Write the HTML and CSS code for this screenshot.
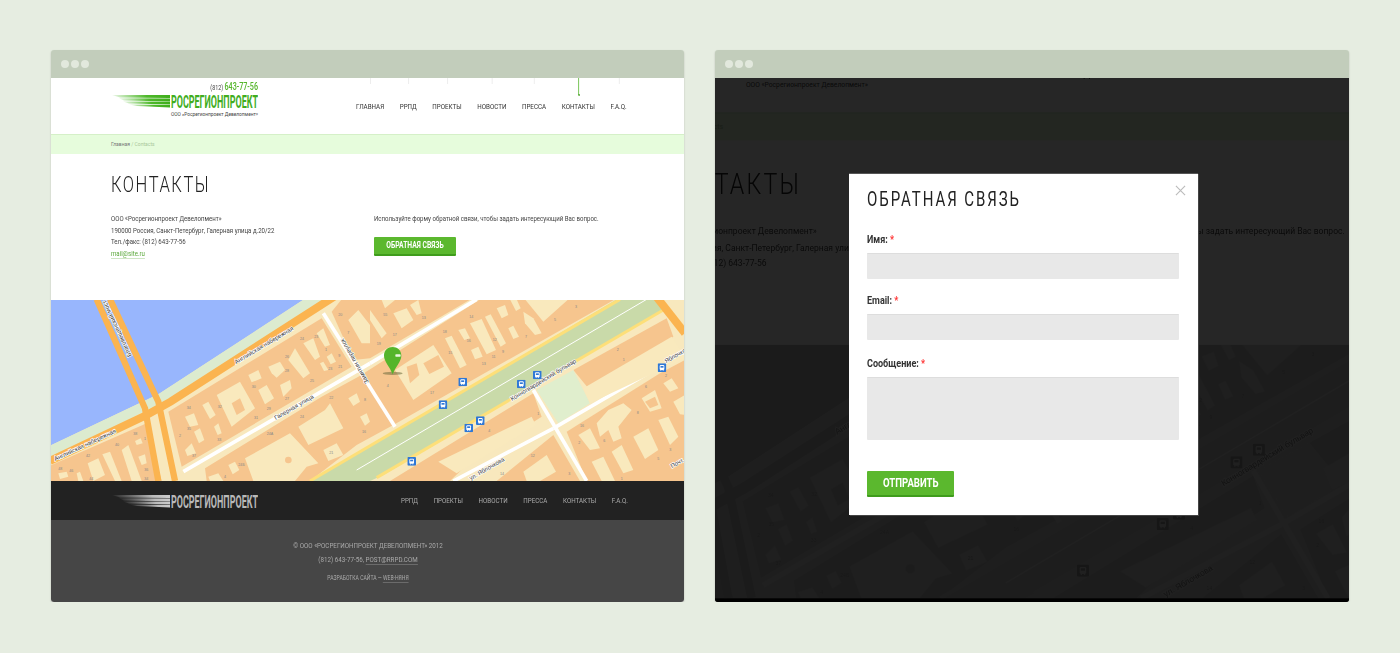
FILE: index.html
```html
<!DOCTYPE html>
<html lang="ru">

<head>
    <meta charset="UTF-8">
    <meta name="viewport" content="width=device-width, initial-scale=1.0">
    <title>Росрегионпроект - контакты</title>

    <link rel="stylesheet" href="styles.css">
</head>

<body>

<!-- shared drawings: logo stripes and the map -->
<svg class="sprite" aria-hidden="true">
    <defs>
        <linearGradient id="gradGreen" x1="0" x2="1" y1="0" y2="0">
            <stop offset="0" stop-color="#4eb82a" stop-opacity="0.1"/>
            <stop offset="0.6" stop-color="#4eb82a"/>
            <stop offset="1" stop-color="#3fae1c"/>
        </linearGradient>
        <linearGradient id="gradGrey" x1="0" x2="1" y1="0" y2="0">
            <stop offset="0" stop-color="#aaa" stop-opacity="0.05"/>
            <stop offset="0.7" stop-color="#bbb"/>
            <stop offset="1" stop-color="#ccc"/>
        </linearGradient>
        <symbol id="stripes" viewBox="0 0 58 13">
            <path d="M0 0L58 0L58 3L8 2.4Z"/>
            <path d="M7 3.2L58 3.4L58 6.4L12 5.6Z"/>
            <path d="M11 6.4L58 6.8L58 9.6L17 8.6Z"/>
            <path d="M17 9.4L58 10L58 12.6L25 11Z"/>
        </symbol>
        <symbol id="bus" viewBox="0 0 26 26">
            <rect width="26" height="26" rx="3" fill="#2f78d6"/>
            <rect x="6" y="5" width="14" height="15" rx="3" fill="#fff"/>
            <rect x="8.500" y="8" width="9" height="5" fill="#2f78d6"/>
            <rect x="8" y="20" width="3" height="2" fill="#fff"/>
            <rect x="15" y="20" width="3" height="2" fill="#fff"/>
        </symbol>
        <symbol id="mapArt" viewBox="3 15 1902 543" preserveAspectRatio="none">
            <rect x="0" y="0" width="1910" height="560" fill="#f8e8bd"/>
            <polygon points="0,0 782,0 325,298 0,452" fill="#98b6fd"/>
            <polygon points="782,0 845,0 370,305 0,492 0,452 325,298" fill="#dcebcf"/>

            <g class="block">
                <polygon points="355,350 815,70 905,215 395,515"/>
                <polygon points="845,50 875,13 1262,13 960,190 910,195"/>
                <polygon points="0,512 290,385 335,558 0,558"/>
                <polygon points="465,520 815,305 925,245 1290,13 1695,13 1030,390 920,450 780,558 470,558"/>
            </g>
            <g class="block" transform="translate(960,0)">
                <polygon points="60,558 490,295 515,365 290,510 240,558"/>
                <polygon points="610,225 890,70 910,125 655,280"/>
                <polygon points="590,410 870,235 945,195 945,558 650,558"/>
                <polygon points="380,558 550,420 630,558"/>
            </g>

            <g class="park" transform="translate(960,0)">
                <polygon points="740,13 880,13 880,45 40,540 0,558 -180,558 0,455"/>
                <polygon points="500,285 610,225 660,325 565,385" class="park-light"/>
            </g>
            <g transform="translate(960,0)" fill="none">
                <line x1="-180" y1="558" x2="750" y2="13" class="road-yellow"/>
                <line x1="20" y1="548" x2="880" y2="45" class="road-yellow"/>
                <line x1="-40" y1="525" x2="830" y2="13" class="road-white thin"/>
            </g>

            <g fill="none">
                <line x1="400" y1="530" x2="960" y2="205" class="road-white"/>
                <line x1="960" y1="205" x2="1280" y2="13" class="road-white"/>
                <line x1="820" y1="55" x2="1035" y2="395" class="road-white"/>
                <line x1="1450" y1="285" x2="1610" y2="558" class="road-white"/>
                <line x1="1210" y1="558" x2="1510" y2="400" class="road-white"/>
                <line x1="1510" y1="400" x2="1905" y2="170" class="road-white"/>
                <polyline points="860,0 362,320 290,360 0,498" class="road-main"/>
                <polyline points="140,13 285,340 325,558" class="road-main thin"/>
                <polyline points="180,13 325,320 375,558" class="road-main thin"/>
                <line x1="1815" y1="0" x2="1905" y2="115" class="road-main"/>
            </g>

            <g class="house">
                <polygon points="595,240 625,225 635,250 605,262"/>
                <polygon points="625,285 650,270 672,310 645,328"/>
                <polygon points="655,215 690,200 705,225 680,248 665,235"/>
                <polygon points="715,195 735,160 780,235 760,250"/>
                <polygon points="690,270 720,255 725,280 700,305"/>
                <polygon points="760,145 790,130 810,185 795,195"/>
                <polygon points="800,115 820,100 840,150 825,155"/>
                <polygon points="830,185 845,175 858,200 842,208"/>
                <polygon points="810,205 820,200 835,225 822,228"/>
                <polygon points="500,300 570,260 615,340 545,395"/>
                <polygon points="457,330 475,320 497,360 480,372"/>
                <polygon points="405,365 432,355 445,390 420,395"/>
                <polygon points="432,410 450,400 463,435 447,445"/>
                <polygon points="492,395 505,385 515,415 503,420"/>
                <polygon points="405,465 425,445 438,475 412,483"/>
                <polygon points="895,75 925,45 960,90 960,145 935,145"/>
                <polygon points="895,310 920,295 930,320 910,333"/>
                <polygon points="930,365 950,355 960,380 945,392"/>
                <polygon points="745,395 825,345 840,325 880,400 775,450"/>
                <polygon points="820,465 860,445 880,480 835,498"/>
                <polygon points="585,490 720,415 805,505 770,515 735,558 610,558"/>
                <polygon points="535,510 555,500 568,525 548,538"/>
                <polygon points="113,505 145,490 165,540 130,558"/>
                <polygon points="157,478 180,470 215,558 195,558"/>
                <polygon points="215,465 235,450 275,558 245,558"/>
                <polygon points="255,438 272,430 278,445 260,450"/>
                <polygon points="265,485 285,478 290,505 275,510"/>
                <polygon points="25,535 50,530 55,545 30,552"/>
                <polygon points="80,535 90,530 100,558 85,558"/>
                <polygon points="475,545 505,535 520,558 480,558"/>
            </g>
            <g class="house" transform="translate(960,0)">
                <polygon points="70,55 110,40 130,75 95,100"/>
                <polygon points="120,30 145,15 155,55 140,60"/>
                <polygon points="0,45 50,115 35,130 0,75"/>
                <polygon points="35,15 75,15 45,40"/>
                <polygon points="225,130 245,122 290,210 270,220"/>
                <polygon points="300,85 335,72 378,165 350,178"/>
                <polygon points="345,65 362,58 408,145 392,155"/>
                <polygon points="265,105 285,100 300,130 283,135"/>
                <polygon points="303,165 325,155 338,185 315,193"/>
                <polygon points="380,40 405,30 415,60 395,70"/>
                <polygon points="415,100 430,92 447,125 430,132"/>
                <polygon points="420,13 440,13 452,40 438,48"/>
                <polygon points="460,50 490,70 515,115 495,120 465,85"/>
                <polygon points="465,13 595,13 520,80"/>
                <polygon points="75,225 190,150 245,235 130,315"/>
                <polygon points="625,420 660,400 690,460 660,465"/>
                <polygon points="680,385 715,345 760,325 785,345 745,395 755,430 730,440 715,405 690,425"/>
                <polygon points="815,310 855,285 875,340 840,350"/>
                <polygon points="790,425 835,400 865,465 825,492"/>
                <polygon points="865,375 895,365 925,425 900,450"/>
                <polygon points="725,470 755,450 790,525 760,535"/>
                <polygon points="665,500 700,485 735,558 695,558"/>
                <polygon points="910,320 945,300 945,360 930,358"/>
                <polygon points="880,265 905,250 925,280 900,290"/>
                <polygon points="460,530 530,480 558,530 510,558 470,558"/>
                <polygon points="205,500 485,365 497,390 260,535"/>
                <polygon points="640,280 905,125 945,190 660,325"/>
            </g>

            <g class="block">
                <polygon points="545,325 570,310 585,345 560,360"/>
                <circle cx="715" cy="495" r="10"/>
                <polygon points="1120,205 1165,180 1182,215 1138,237"/>
                <polygon points="1070,215 1100,205 1108,240 1080,265"/>
                <polygon points="1785,320 1815,305 1825,330 1800,340"/>
            </g>

            <g class="num">
                <text x="750" y="134">24</text><text x="793" y="130">23</text><text x="825" y="168">1</text><text x="865" y="186">9</text>
                <text x="705" y="190">26</text><text x="705" y="230">28</text><text x="780" y="262">25</text><text x="835" y="226">23</text><text x="865" y="218">21</text>
                <text x="605" y="278">30</text><text x="705" y="314">27</text><text x="650" y="346">29</text><text x="612" y="373">31</text><text x="503" y="338">32</text>
                <text x="410" y="341">34</text><text x="411" y="404">35</text><text x="502" y="437">33</text><text x="387" y="427">2</text><text x="426" y="487">37</text>
                <text x="650" y="420">24А</text><text x="750" y="368">24</text><text x="838" y="313">22</text><text x="942" y="318">8</text><text x="936" y="414">16</text><text x="838" y="476">21</text>
                <text x="565" y="513">24Б</text><text x="522" y="550">4</text><text x="250" y="420">38</text><text x="282" y="436">1</text><text x="195" y="454">40</text>
                <text x="108" y="486">42</text><text x="25" y="525">48</text><text x="58" y="530">46</text><text x="118" y="555">44</text><text x="283" y="527">36</text><text x="283" y="556">34</text>
                <text x="865" y="62">20</text><text x="892" y="118">7</text>
                <text x="1000" y="62">55</text><text x="1115" y="72">13</text><text x="1028" y="122">17</text><text x="980" y="149">19</text>
                <text x="1258" y="70">14</text><text x="1178" y="115">18</text><text x="1250" y="141">16</text><text x="1195" y="177">15</text><text x="1328" y="138">12</text>
                <text x="1295" y="209">13</text><text x="1325" y="190">11</text><text x="1356" y="175">9</text><text x="1010" y="277">4</text><text x="1140" y="296">17</text>
                <text x="1425" y="130">7</text><text x="1512" y="77">5</text><text x="1575" y="39">3</text><text x="1700" y="168">2</text><text x="1718" y="199">1</text>
                <text x="1315" y="412">4</text><text x="1462" y="359">1</text><text x="1590" y="396">16</text><text x="1585" y="448">2</text><text x="1660" y="442">6</text>
                <text x="1760" y="358">8</text><text x="1785" y="280">6</text><text x="1845" y="245">2</text><text x="1822" y="494">5</text><text x="1858" y="468">3</text>
                <text x="1442" y="485">12</text><text x="1350" y="540">14</text><text x="1555" y="541">3</text><text x="1712" y="556">1</text>
            </g>

            <g class="label">
                <text transform="translate(558,208) rotate(-31)">Английская набережная</text>
                <text transform="translate(16,498) rotate(-25)">Английская набережная</text>
                <text transform="translate(245,182) rotate(-115)">Благовещенский мост</text>
                <text transform="translate(677,375) rotate(-30)">Галерная улица</text>
                <text transform="translate(957,262) rotate(-120)">Замятин переулок</text>
                <text transform="translate(1386,318) rotate(-31)">Конногвардейский бульвар</text>
                <text transform="translate(1262,556) rotate(-30)">ул. Яблочкова</text>
                <text transform="translate(1848,205) rotate(-30)">Яблочкова</text>
                <text transform="translate(1866,520) rotate(-30)">Почт.</text>
            </g>

            <use href="#bus" x="1225" y="248" width="26" height="26"/>
            <use href="#bus" x="1166" y="316" width="26" height="26"/>
            <use href="#bus" x="1401" y="254" width="26" height="26"/>
            <use href="#bus" x="1449" y="227" width="26" height="26"/>
            <use href="#bus" x="1278" y="364" width="26" height="26"/>
            <use href="#bus" x="1243" y="386" width="26" height="26"/>
            <use href="#bus" x="1072" y="486" width="26" height="26"/>
            <use href="#bus" x="1823" y="205" width="26" height="26"/>

            <ellipse cx="1028" cy="235" rx="30" ry="5" fill="#6b6a3c" opacity="0.55"/>
            <path d="M1028 238C1020 215 1002 200 1002 182C1002 166 1014 156 1028 156C1042 156 1054 166 1054 182C1054 200 1036 215 1028 238Z" fill="#55b52b"/>
            <rect x="1036" y="178" width="16" height="7" rx="2" fill="#eaf7e0"/>
        </symbol>
    </defs>
</svg>

<div class="stage">

    <!-- left window: the page itself -->
    <div class="window">
        <div class="window-bar"><i></i><i></i><i></i></div>
        <div class="window-view">
            <div class="page">
                <header class="head">
                    <div class="brand">
                        <div class="phone">(812) <b>643-77-56</b></div>
                        <svg class="logo" viewBox="0 0 146 14">
                            <use href="#stripes" x="0" y="0" width="58" height="13" fill="url(#gradGreen)"/>
                            <text x="59" y="13" textLength="87" lengthAdjust="spacingAndGlyphs" class="logo-text logo-text-green">РОСРЕГИОНПРОЕКТ</text>
                        </svg>
                        <div class="slogan">ООО «Росрегионпроект Девелопмент»</div>
                    </div>
                    <nav class="nav">
                        <a>Главная</a><a>РРПД</a><a>Проекты</a><a>Новости</a><a>Пресса</a><a class="active">Контакты</a><a>F.A.Q.</a>
                    </nav>
                </header>
                <div class="crumbs">Главная <span>/ Contacts</span></div>
                <main class="content">
                    <h1>Контакты</h1>
                    <div class="columns">
                        <div class="col-address">
                            <div class="squeeze">
                                ООО «Росрегионпроект Девелопмент»<br>
                                190000 Россия, Санкт-Петербург, Галерная улица д.20/22<br>
                                Тел./факс: (812) 643-77-56<br>
                                <a class="mail">mail@site.ru</a>
                            </div>
                        </div>
                        <div class="col-form">
                            <p class="squeeze">Используйте форму обратной связи, чтобы задать интересующий Вас вопрос.</p>
                            <button type="button" class="btn-small"><span>Обратная связь</span></button>
                        </div>
                    </div>
                </main>
                <svg class="map"><use href="#mapArt" width="634" height="181"/></svg>
                <div class="foot-nav">
                    <svg class="logo" viewBox="0 0 146 14">
                        <use href="#stripes" x="0" y="0" width="58" height="13" fill="url(#gradGrey)"/>
                        <text x="59" y="13" textLength="87" lengthAdjust="spacingAndGlyphs" class="logo-text logo-text-grey">РОСРЕГИОНПРОЕКТ</text>
                    </svg>
                    <nav class="nav nav-foot">
                        <a>РРПД</a><a>Проекты</a><a>Новости</a><a>Пресса</a><a>Контакты</a><a>F.A.Q.</a>
                    </nav>
                </div>
                <footer class="foot">
                    <p>© ООО «РОСРЕГИОНПРОЕКТ ДЕВЕЛОПМЕНТ» 2012</p>
                    <p>(812) 643-77-56, <a>POST@RRPD.COM</a></p>
                    <p class="foot-small">РАЗРАБОТКА САЙТА — <a>WEB-НЯНЯ</a></p>
                </footer>
            </div>
        </div>
    </div>

    <!-- right window: same page zoomed in, dimmed, with the popup -->
    <div class="window">
        <div class="window-bar"><i></i><i></i><i></i></div>
        <div class="window-view">
            <div class="page page-zoom">
                <header class="head">
                    <div class="brand">
                        <div class="phone">(812) <b>643-77-56</b></div>
                        <svg class="logo" viewBox="0 0 146 14">
                            <use href="#stripes" x="0" y="0" width="58" height="13" fill="url(#gradGreen)"/>
                            <text x="59" y="13" textLength="87" lengthAdjust="spacingAndGlyphs" class="logo-text logo-text-green">РОСРЕГИОНПРОЕКТ</text>
                        </svg>
                        <div class="slogan">ООО «Росрегионпроект Девелопмент»</div>
                    </div>
                    <nav class="nav">
                        <a>Главная</a><a>РРПД</a><a>Проекты</a><a>Новости</a><a>Пресса</a><a class="active">Контакты</a><a>F.A.Q.</a>
                    </nav>
                </header>
                <div class="crumbs">Главная <span>/ Contacts</span></div>
                <main class="content">
                    <h1>Контакты</h1>
                    <div class="columns">
                        <div class="col-address">
                            <div class="squeeze">
                                ООО «Росрегионпроект Девелопмент»<br>
                                190000 Россия, Санкт-Петербург, Галерная улица д.20/22<br>
                                Тел./факс: (812) 643-77-56<br>
                                <a class="mail">mail@site.ru</a>
                            </div>
                        </div>
                        <div class="col-form">
                            <p class="squeeze">Используйте форму обратной связи, чтобы задать интересующий Вас вопрос.</p>
                        </div>
                    </div>
                </main>
                <svg class="map"><use href="#mapArt" width="634" height="181"/></svg>
            </div>
            <div class="overlay"></div>
            <div class="popup">
                <svg class="popup-close" viewBox="0 0 12 12"><path d="M1 1L11 11M11 1L1 11"/></svg>
                <h2>Обратная связь</h2>
                <label>Имя: <em>*</em></label>
                <div class="field"></div>
                <label>Email: <em>*</em></label>
                <div class="field field-wide-gap"></div>
                <label>Сообщение: <em>*</em></label>
                <div class="field field-big"></div>
                <button type="button" class="btn-big"><span>Отправить</span></button>
            </div>
        </div>
    </div>

</div>

</body>
</html>
```

FILE: styles.css
```css
* {
    box-sizing: border-box;
}

body {
    margin: 0;
    background: #e6ede1;
    font-family: "Roboto", "Liberation Sans", sans-serif;
    overflow: hidden;
}

.sprite {
    position: absolute;
    width: 0;
    height: 0;
}

.stage {
    display: flex;
    gap: 31px;
    padding: 50px 0 0 51px;
}

.window {
    width: 633px;
    height: 552px;
    border-radius: 3px;
    overflow: hidden;
    box-shadow: 0 1px 2px rgba(0, 0, 0, 0.2);
}

.window:last-child {
    width: 634px;
}

.window-bar {
    height: 28px;
    background: #c2cdbb;
    display: flex;
    align-items: center;
    gap: 2px;
    padding-left: 10px;
}

.window-bar i {
    width: 8px;
    height: 8px;
    border-radius: 50%;
    background: #e2e8dd;
}

.window-view {
    position: relative;
    height: 524px;
    overflow: hidden;
    background: #000;
}

/* page */
.page {
    width: 634px;
    background: #fff;
    color: #333;
}

.page-zoom {
    position: absolute;
    left: 0;
    top: 0;
    transform-origin: 0 0;
    transform: translate(-137px, -44px) scale(1.4);
}

.page-zoom .map {
    filter: grayscale(1) contrast(0.4) brightness(1.2);
}

.head {
    height: 57px;
    display: flex;
    border-bottom: 1px solid #d5f0c8;
}

.brand {
    width: 146px;
    margin-left: 61px;
    padding-top: 4px;
    text-align: right;
}

.phone {
    font-size: 7.5px;
    line-height: 10px;
    color: #444;
    transform: scaleX(0.72);
    transform-origin: right center;
}

.phone b {
    font-size: 10px;
    font-weight: 500;
    color: #55b52b;
}

.logo {
    display: block;
    flex-shrink: 0;
    width: 146px;
    height: 14px;
    margin-top: 2px;
}

.logo-text {
    font-family: "Roboto", sans-serif;
    font-weight: 700;
    font-size: 18px;
}

.logo-text-green {
    fill: #41ad1e;
}

.logo-text-grey {
    fill: #b9b9b9;
}

.slogan {
    font-size: 4.8px;
    line-height: 6px;
    margin-top: 3px;
    color: #444;
}

.nav {
    display: flex;
    flex-shrink: 0;
    gap: 20px;
    margin-left: 98px;
    padding-top: 24px;
    font-size: 8px;
    line-height: 9px;
    text-transform: uppercase;
    color: #333;
    transform: scaleX(0.78);
    transform-origin: left center;
}

.nav a {
    position: relative;
}

.nav a::before {
    content: "";
    position: absolute;
    left: 50%;
    top: -24px;
    width: 1px;
    height: 6px;
    background: #e8e8e8;
}

.nav a.active::before {
    height: 17px;
    background: #55b52b;
}

.nav a.active::after {
    content: "";
    position: absolute;
    left: calc(50% - 0.5px);
    top: -8px;
    width: 2px;
    height: 2px;
    border-radius: 50%;
    background: #3f9c1c;
}

.crumbs {
    height: 19px;
    padding-left: 60px;
    background: #e6fcdc;
    font-size: 5px;
    line-height: 19px;
    color: #777;
}

.crumbs span {
    color: #a9c79b;
}

.content {
    height: 146px;
    padding: 20px 0 0 60px;
}

h1 {
    margin: 0;
    height: 21px;
    font-size: 21.500px;
    line-height: 21px;
    font-weight: 300;
    letter-spacing: 2px;
    text-transform: uppercase;
    color: #222;
    transform: scaleX(0.77);
    transform-origin: left center;
}

.columns {
    display: flex;
    margin-top: 19px;
    font-size: 7px;
    line-height: 11.600px;
    color: #444;
}

.col-address {
    width: 263px;
}

.squeeze {
    width: 330px;
    transform: scaleX(0.87);
    transform-origin: left center;
}

.mail {
    color: #5aa83a;
    border-bottom: 1px solid #cfe6c4;
}

.col-form p {
    margin: 0;
}

.btn-small {
    display: block;
    width: 82px;
    height: 19px;
    margin-top: 11px;
    padding: 0;
    background: #5bb82e;
    border: 0;
    border-bottom: 2px solid #3f9c1c;
    border-radius: 1px;
    color: #fff;
    font-family: "Roboto", sans-serif;
    font-weight: 700;
    font-size: 8.500px;
    text-transform: uppercase;
}

.btn-small span,
.btn-big span {
    display: inline-block;
    white-space: nowrap;
    transform: scaleX(0.8);
}

.map {
    display: block;
    width: 634px;
    height: 181px;
}

.block {
    fill: #f6c58e;
}

.park {
    fill: #c9daa9;
}

.park-light {
    fill: #e0eecd;
}

.road-yellow {
    stroke: #fddf79;
    stroke-width: 9;
}

.road-white {
    stroke: #fff;
    stroke-width: 11;
}

.road-main {
    stroke: #fbb450;
    stroke-width: 24;
}

.road-main.thin {
    stroke-width: 19;
}

.road-white.thin {
    stroke-width: 3;
}

.house {
    fill: #f9e9bd;
}

.num {
    font-family: "Liberation Sans", sans-serif;
    font-size: 11px;
    fill: #888;
}

.label {
    font-family: "Liberation Sans", sans-serif;
    font-size: 18px;
    fill: #333;
    stroke: #fff;
    stroke-width: 4px;
    paint-order: stroke;
}

.foot-nav {
    height: 39px;
    display: flex;
    align-items: center;
    padding-left: 61px;
    background: #222;
}

.nav-foot {
    margin-left: 143px;
    padding-top: 0;
    color: #aaa;
}

.nav-foot a::before {
    display: none;
}

.foot {
    height: 82px;
    padding-top: 21px;
    background: #464646;
    text-align: center;
    font-size: 8px;
    line-height: 10px;
    color: #aaa;
}

.foot p {
    margin: 0 0 4px;
    transform: scaleX(0.78);
}

.foot a {
    border-bottom: 1px solid #6b6b6b;
}

.foot p.foot-small {
    margin-top: 8px;
    font-size: 6.500px;
}

/* popup */
.overlay {
    position: absolute;
    inset: 0;
    background: rgba(0, 0, 0, 0.85);
}

.popup {
    position: absolute;
    left: 134px;
    top: 95px;
    width: 349px;
    height: 342px;
    padding: 16px 19px 0 18px;
    background: #fff;
    border-top: 1px solid #555;
    box-shadow: 1px 1px 0 #444;
}

.popup-close {
    position: absolute;
    right: 12px;
    top: 11px;
    width: 11px;
    height: 11px;
    fill: none;
    stroke: #bbb;
    stroke-width: 1.200;
}

h2 {
    margin: 0 0 25px;
    font-size: 19.500px;
    line-height: 19px;
    font-weight: 400;
    letter-spacing: 2.500px;
    text-transform: uppercase;
    color: #222;
    transform: scaleX(0.77);
    transform-origin: left center;
}

label {
    display: block;
    height: 12px;
    margin-bottom: 7px;
    font-weight: 700;
    font-size: 10.500px;
    line-height: 12px;
    color: #333;
    transform: scaleX(0.86);
    transform-origin: left center;
}

label em {
    font-style: normal;
    color: #f33;
}

.field {
    height: 26px;
    margin-bottom: 16px;
    background: #e8e8e8;
    border-top: 1px solid #ddd;
    border-radius: 1px;
}

.field-wide-gap {
    margin-bottom: 18px;
}

.field-big {
    height: 63px;
    margin-bottom: 31px;
}

.btn-big {
    display: block;
    width: 87px;
    height: 26px;
    padding: 0;
    background: #5bb82e;
    border: 0;
    border-bottom: 2px solid #3f9c1c;
    border-radius: 1px;
    color: #fff;
    font-family: "Roboto", sans-serif;
    font-weight: 700;
    font-size: 12px;
    text-transform: uppercase;
}
```
